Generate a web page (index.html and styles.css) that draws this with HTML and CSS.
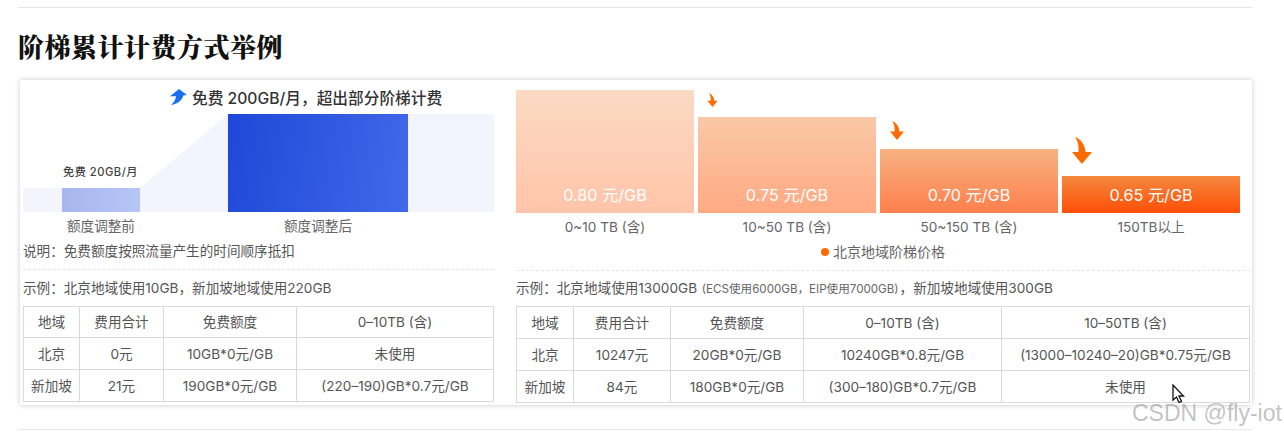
FILE: index.html
```html
<!DOCTYPE html>
<html lang="zh-CN">
<head>
<meta charset="utf-8">
<title>阶梯累计计费方式举例</title>
<link rel="stylesheet" href="styles.css">
</head>
<body>
<div class="page">
  <hr class="rule">
  <h2 class="heading">阶梯累计计费方式举例</h2>
  <div class="card">
    <section class="panel panel-left">
      <div class="quota-title">
        <svg class="up-icon" viewBox="0 0 17 16"><path d="M9 0L17 6L13.2 6.4C12.4 11 7.5 15 1 16C4 13.4 5.8 10.4 6 7.2L0 7.2Z"/></svg>
        <span>免费 200GB/月&#xFF0C;超出部分阶梯计费</span>
      </div>
      <div class="quota-chart">
        <div class="quota-before">
          <div class="quota-small-label">免费 20GB/月</div>
          <div class="band"><div class="small-bar"></div></div>
        </div>
        <svg class="slope" viewBox="0 0 88 98" preserveAspectRatio="none"><path d="M0 74L88 0V98H0Z"/></svg>
        <div class="big-bar"></div>
        <div class="band-tall"></div>
      </div>
      <div class="quota-labels">
        <span class="ql-before">额度调整前</span>
        <span class="ql-after">额度调整后</span>
      </div>
      <p class="note">说明&#xFF1A;免费额度按照流量产生的时间顺序抵扣</p>
      <div class="dash dash-left"></div>
      <p class="example">示例&#xFF1A;北京地域使用10GB&#xFF0C;新加坡地域使用220GB</p>
      <table class="tbl tbl-left">
        <tr class="head-row"><td class="l1">地域</td><td class="l2">费用合计</td><td class="l3">免费额度</td><td>0–10TB (含)</td></tr>
        <tr><td>北京</td><td>0元</td><td>10GB*0元/GB</td><td>未使用</td></tr>
        <tr><td>新加坡</td><td>21元</td><td>190GB*0元/GB</td><td>(220–190)GB*0.7元/GB</td></tr>
      </table>
    </section>
    <section class="panel panel-right">
      <div class="price-chart">
        <div class="step">
          <div class="bar bar1">0.80 元/GB</div>
          <div class="step-label">0~10 TB (含)</div>
        </div>
        <div class="step">
          <svg class="arrow arrow2" viewBox="0 0 20 27"><path d="M3 0C9 2 13 8 13.5 15H20L10 27L0 15H6.5C7 9 6 4 3 0Z"/></svg>
          <div class="bar bar2">0.75 元/GB</div>
          <div class="step-label">10~50 TB (含)</div>
        </div>
        <div class="step">
          <svg class="arrow arrow3" viewBox="0 0 20 27"><path d="M3 0C9 2 13 8 13.5 15H20L10 27L0 15H6.5C7 9 6 4 3 0Z"/></svg>
          <div class="bar bar3">0.70 元/GB</div>
          <div class="step-label">50~150 TB (含)</div>
        </div>
        <div class="step">
          <svg class="arrow arrow4" viewBox="0 0 20 27"><path d="M3 0C9 2 13 8 13.5 15H20L10 27L0 15H6.5C7 9 6 4 3 0Z"/></svg>
          <div class="bar bar4">0.65 元/GB</div>
          <div class="step-label">150TB以上</div>
        </div>
      </div>
      <p class="legend"><span class="dot"></span>北京地域阶梯价格</p>
      <div class="dash dash-right"></div>
      <p class="example example-right">示例&#xFF1A;北京地域使用13000GB <small class="sub">(ECS使用6000GB&#xFF0C;EIP使用7000GB)</small>&#xFF0C;新加坡地域使用300GB</p>
      <table class="tbl tbl-right">
        <tr class="head-row"><td class="r1">地域</td><td class="r2">费用合计</td><td class="r3">免费额度</td><td class="r4">0–10TB (含)</td><td>10–50TB (含)</td></tr>
        <tr><td>北京</td><td>10247元</td><td>20GB*0元/GB</td><td>10240GB*0.8元/GB</td><td>(13000–10240–20)GB*0.75元/GB</td></tr>
        <tr><td>新加坡</td><td>84元</td><td>180GB*0元/GB</td><td>(300–180)GB*0.7元/GB</td><td>未使用</td></tr>
      </table>
    </section>
  </div>
  <hr class="rule rule-bottom">
</div>
<svg class="cursor" viewBox="0 0 13 19"><path d="M1 1V16L4.5 13L7 18.5L9.5 17.5L7 12H11.5Z"/></svg>
<div class="watermark">CSDN @fly-iot</div>
</body>
</html>
```

FILE: styles.css
```css
html, body {
  margin: 0;
  padding: 0;
  background: #fff;
  overflow: hidden;
}
body {
  position: relative;
  width: 1284px;
  height: 435px;
  font-family: Inter, "Noto Sans CJK SC", sans-serif;
  font-size: 13.6px;
  color: #555;
}
p { margin: 0; }
.page {
  width: 1235px;
  padding: 7px 0 0 18px;
}
.rule {
  margin: 0;
  border: 0;
  border-top: 1px solid #e6e7e9;
}
.rule-bottom { margin-top: 24px; }
.heading {
  margin: 0;
  height: 72px;
  line-height: 76px;
  font-family: "Noto Serif CJK SC", "Liberation Serif", "Noto Sans CJK SC", serif;
  font-size: 26px;
  font-weight: 900;
  letter-spacing: 0.5px;
  color: #111;
}
.card {
  display: flex;
  gap: 22px;
  width: 1226px;
  height: 325px;
  margin-left: 2px;
  padding-left: 3px;
  padding-right: 3px;
  background: #fff;
  box-shadow: 0 0 5px rgba(0, 0, 0, 0.22);
}
.panel { display: flex; flex-direction: column; }
.panel-left { width: 471px; }
.panel-right { width: 734px; }

/* quota chart */
.quota-title {
  display: flex;
  align-items: center;
  gap: 5px;
  height: 34px;
  margin-left: 147px;
  font-size: 15.7px;
  font-weight: 500;
  color: #333;
}
.up-icon { width: 17px; height: 16px; fill: #1a6ff0; }
.quota-chart {
  display: flex;
  align-items: flex-end;
  height: 98px;
}
.quota-before { width: 117px; }
.quota-small-label {
  margin-left: 40px;
  margin-bottom: 9px;
  line-height: 14px;
  font-size: 11.2px;
  letter-spacing: 0.5px;
  font-weight: 500;
  color: #444;
}
.band { height: 24px; background: #f3f4fd; }
.small-bar {
  width: 78px;
  height: 24px;
  margin-left: 39px;
  background: linear-gradient(90deg, #a7b6ee, #b5c6f6);
}
.slope { width: 88px; height: 98px; fill: #f3f4fd; display: block; }
.big-bar {
  width: 180px;
  height: 98px;
  background: linear-gradient(100deg, #1e48d8, #4169e9);
}
.band-tall { width: 86px; height: 98px; background: #f3f4fd; }
.quota-labels {
  display: flex;
  margin-top: 5px;
  line-height: 18px;
  color: #666;
}
.ql-before { box-sizing: border-box; width: 205px; padding-left: 44px; }
.ql-after { width: 180px; text-align: center; }
.note { margin-top: 6px; line-height: 20px; color: #555; }

.dash { height: 0; border-top: 1px dashed #e4e4e4; }
.dash-left { margin-top: 8px; }
.dash-right { margin-top: 8px; }
.example { margin-top: 8px; line-height: 20px; color: #555; }
.example-right { margin-top: 7px; }
.sub { margin: 0 1px; font-size: 11.6px; color: #666; }

/* price chart */
.price-chart {
  display: flex;
  align-items: flex-end;
  gap: 4px;
  height: 158px;
  margin-top: 3px;
}
.step { width: 178px; display: flex; flex-direction: column; }
.bar {
  display: flex;
  align-items: flex-end;
  justify-content: center;
  padding-bottom: 8px;
  box-sizing: border-box;
  line-height: 20px;
  font-size: 16.2px;
  color: #fff;
}
.bar1 { height: 123px; background: linear-gradient(180deg, #fbdac3, #ffc4a9); }
.bar2 { height: 96px; background: linear-gradient(180deg, #f9c8a6, #ffa982); }
.bar3 { height: 64px; background: linear-gradient(180deg, #f6b282, #ff7f4b); }
.bar4 { height: 37px; background: linear-gradient(180deg, #f5883f, #ff4f05); }
.step-label { height: 28px; line-height: 28px; text-align: center; color: #666; }
.arrow { display: block; fill: #ff6a00; }
.arrow2 { width: 11px; height: 14px; margin: 0 0 10px 9px; }
.arrow3 { width: 14px; height: 19px; margin: 0 0 9px 10px; }
.arrow4 { width: 20px; height: 27px; margin: 0 0 12px 10px; }
.legend {
  display: flex;
  justify-content: center;
  align-items: center;
  gap: 4px;
  margin-top: 1px;
  line-height: 20px;
  font-size: 14px;
  color: #666;
}
.dot { width: 8px; height: 8px; border-radius: 50%; background: #ff6a00; }

/* tables */
.tbl {
  margin-top: 8px;
  border-collapse: collapse;
  table-layout: fixed;
  color: #555;
}
.tbl-right { margin-top: 7px; }
.tbl td {
  height: 29px;
  padding: 0 0 2px;
  border: 1px solid #d9d9d9;
  text-align: center;
}
.tbl-left .head-row td { height: 28px; }
.tbl-left { width: 471px; }
.tbl-right { width: 734px; }
.l1 { width: 55px; }
.l2 { width: 83px; }
.l3 { width: 132px; }
.r1 { width: 56px; }
.r2 { width: 96px; }
.r3 { width: 132px; }
.r4 { width: 197px; }

/* overlays */
.cursor {
  position: absolute;
  left: 1172px;
  top: 384px;
  width: 13px;
  height: 19px;
  fill: #fff;
  stroke: #111;
  stroke-width: 1.3;
}
.watermark {
  position: absolute;
  left: 1132px;
  top: 399px;
  white-space: nowrap;
  font-family: "Liberation Sans", sans-serif;
  font-size: 23px;
  line-height: 28px;
  color: rgba(120, 120, 120, 0.45);
}
```
